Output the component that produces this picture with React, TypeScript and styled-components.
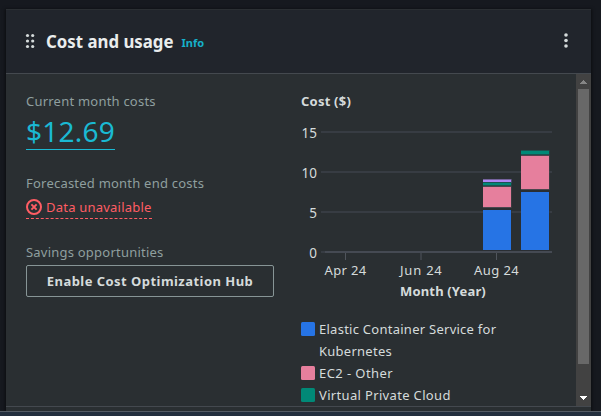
import React from 'react';
import styled, { createGlobalStyle } from 'styled-components';

const GlobalStyle = createGlobalStyle`
  * { box-sizing: border-box; }
  body { margin: 0; background: #16191f; overflow: hidden; }
`;

const Page = styled.div`
  width: 601px;
  height: 416px;
  display: flex;
  flex-direction: column;
  padding-top: 9px;
  background: #16191f;
  font-family: 'Noto Sans', sans-serif;
  font-size: 13px;
  line-height: 22px;
  letter-spacing: 0.22px;
  color: #d5dbdb;
  overflow: hidden;
`;

const Widget = styled.section`
  width: 585px;
  height: 402px;
  margin-left: 6px;
  display: flex;
  flex-direction: column;
  flex: none;
  background: #2a2f32;
  border-top: 1px solid #2b2f33;
  box-shadow: 0 1px 3px 1px rgba(0, 0, 0, 0.5);
`;

const Header = styled.header`
  height: 64px;
  flex: none;
  display: flex;
  align-items: center;
  padding: 0 20px 2px 19px;
  background: #21252c;
  border-bottom: 1px solid #44494f;
`;

const Title = styled.h2`
  margin: 0 -9px 0 11px;
  font-size: 18px;
  line-height: 22px;
  font-weight: 700;
  letter-spacing: 0;
  transform: scaleX(0.934);
  transform-origin: 0 50%;
  color: #eaeded;
  white-space: nowrap;
`;

const InfoLink = styled.a`
  margin: 4px auto 0 8px;
  font-size: 11px;
  line-height: 16px;
  font-weight: 700;
  letter-spacing: 0;
  color: #16b0c9;
`;

const Body = styled.div`
  height: 332px;
  flex: none;
  display: flex;
  overflow: hidden;
`;

const Content = styled.div`
  flex: 1;
  display: grid;
  grid-template-columns: 248px 251px;
  column-gap: 27px;
  padding: 16px 0 0 20px;
`;

const Summary = styled.div`
  display: flex;
  flex-direction: column;
  align-items: flex-start;
`;

const Metric = styled.div<{ $height: number }>`
  height: ${(p) => p.$height}px;
  display: flex;
  flex-direction: column;
  align-items: flex-start;
`;

const Label = styled.div`
  height: 22px;
  color: #8f9f9f;
  white-space: nowrap;
`;

const Amount = styled.a`
  height: 38px;
  font-size: 28px;
  line-height: 38px;
  letter-spacing: 0.25px;
  color: #1ab9d3;
  border-bottom: 1px solid #1ab9d3;
`;

const ErrorStatus = styled.a`
  height: 22px;
  margin-top: 3px;
  display: flex;
  gap: 4px;
  line-height: 20px;
  color: #ff5d64;
  white-space: nowrap;
  border-bottom: 1px dashed #ff5d64;

  svg { margin-top: 2px; }
`;

const HubButton = styled.button`
  width: 248px;
  height: 32px;
  margin-top: 2px;
  padding: 0;
  font: 700 13px/22px 'Noto Sans', sans-serif;
  letter-spacing: 0.46px;
  color: #d5dbdb;
  background: transparent;
  border: 1px solid #879596;
  border-radius: 2px;
  white-space: nowrap;
`;

const ChartPanel = styled.div`
  display: flex;
  flex-direction: column;
`;

const ChartTitle = styled.div`
  height: 22px;
  font-weight: 700;
`;

const Chart = styled.svg`
  display: block;
  flex: none;
  margin-bottom: 14px;
  font-family: 'Noto Sans', sans-serif;
  font-size: 13px;
`;

const LegendItem = styled.div<{ $spacing: number }>`
  display: flex;
  gap: 4px;
  width: 215px;
  flex: none;
  letter-spacing: ${(p) => p.$spacing}px;
`;

const Swatch = styled.span<{ $color: string }>`
  width: 14px;
  height: 14px;
  flex: none;
  margin-top: 4px;
  border-radius: 1.5px;
  background: ${(p) => p.$color};
`;

const Scrollbar = styled.div`
  width: 15px;
  display: flex;
  flex-direction: column;
  align-items: center;
  background: #424242;
`;

const Thumb = styled.div`
  width: 11px;
  height: 275px;
  background: #686868;
`;

const ArrowBox = styled.div<{ $height: number }>`
  height: ${(p) => p.$height}px;

  svg { display: block; }
`;

const Footer = styled.div`
  flex: 1;
  border-top: 1px solid #44494f;
`;

const BottomBar = styled.div`
  flex: 1;
  background: #232f3e;
  border-top: 1px solid #545b64;
`;

const BLUE = '#2674e5';
const PINK = '#e67f9d';
const GREEN = '#018977';
const PURPLE = '#b088f5';

const segments = [
  { x: 483, y: 180, h: 2, color: PURPLE },
  { x: 483, y: 183, h: 2, color: GREEN },
  { x: 483, y: 187, h: 20, color: PINK },
  { x: 483, y: 210, h: 40, color: BLUE },
  { x: 521, y: 151, h: 3, color: GREEN },
  { x: 521, y: 156, h: 33, color: PINK },
  { x: 521, y: 192, h: 58, color: BLUE },
];

const edgeColor: Record<string, string> = {
  [BLUE]: '#2a2e33',
  [PINK]: '#4b464e',
  [GREEN]: '#1c5450',
  [PURPLE]: '#75629c',
};

const legend = [
  { color: BLUE, label: 'Elastic Container Service for Kubernetes', spacing: 0.26 },
  { color: PINK, label: 'EC2 - Other', spacing: 0.42 },
  { color: GREEN, label: 'Virtual Private Cloud', spacing: 0.34 },
];

const CostChart = () => (
  <Chart width="251" height="192" viewBox="301 112 251 192" fill="#d5dbdb">
    {[131, 171, 211].map((y) => (
      <rect key={y} x="321" y={y} width="231" height="2" fill="#373c43" />
    ))}
    <rect x="321" y="251" width="4" height="2" fill="#373c43" />
    <rect x="325" y="251" width="227" height="2" fill="#454a53" />
    <rect x="345" y="253" width="1" height="7" fill="#50555c" />
    <rect x="420" y="253" width="2" height="7" fill="#3c4147" />
    <rect x="496" y="253" width="1" height="7" fill="#50555c" />
    {segments.map((s) => (
      <g key={`${s.x}-${s.y}`}>
        <rect x={s.x} y={s.y - 1} width="28.5" height={s.h + 2} fill={edgeColor[s.color]} />
        <rect x={s.x} y={s.y} width="28" height={s.h} fill={s.color} />
      </g>
    ))}
    {[['15', 138], ['10', 178], ['5', 218], ['0', 258]].map(([t, y]) => (
      <text key={t} x="317" y={y} fontSize="13.5" letterSpacing="0" textAnchor="end">{t}</text>
    ))}
    <text x="324.5" y="275" textLength="42">Apr 24</text>
    <text x="400" y="275" textLength="42">Jun 24</text>
    <text x="474" y="275" textLength="45">Aug 24</text>
    <text x="400" y="296" fontWeight="700" textLength="86">Month (Year)</text>
  </Chart>
);

export default function App() {
  return (
    <>
      <GlobalStyle />
      <Page>
        <Widget>
          <Header>
            <svg width="10" height="16" fill="#d5dbdb">
              {[2.5, 7.7].map((x) => [2.5, 8, 13.5].map((y) => (
                <circle key={`${x}-${y}`} cx={x} cy={y} r="1.6" />
              )))}
            </svg>
            <Title>Cost and usage</Title>
            <InfoLink>Info</InfoLink>
            <svg width="10" height="16" fill="#d5dbdb">
              {[2, 7.5, 13].map((y) => (
                <circle key={y} cx="5" cy={y} r="1.8" />
              ))}
            </svg>
          </Header>
          <Body>
            <Content>
              <Summary>
                <Metric $height={82}>
                  <Label>Current month costs</Label>
                  <Amount>$12.69</Amount>
                </Metric>
                <Metric $height={69}>
                  <Label>Forecasted month end costs</Label>
                  <ErrorStatus>
                    <svg width="16" height="16" viewBox="0 0 16 16" fill="none" stroke="#ff5d64" strokeWidth="2">
                      <circle cx="8" cy="8" r="7" />
                      <path d="M5.4 5.4l5.2 5.2M10.6 5.4l-5.2 5.2" />
                    </svg>
                    Data unavailable
                  </ErrorStatus>
                </Metric>
                <Label>Savings opportunities</Label>
                <HubButton>Enable Cost Optimization Hub</HubButton>
              </Summary>
              <ChartPanel>
                <ChartTitle>Cost ($)</ChartTitle>
                <CostChart />
                {legend.map((item) => (
                  <LegendItem key={item.label} $spacing={item.spacing}>
                    <Swatch $color={item.color} />
                    <span>{item.label}</span>
                  </LegendItem>
                ))}
              </ChartPanel>
            </Content>
            <Scrollbar>
              <ArrowBox $height={15}>
                <svg width="15" height="15" shapeRendering="crispEdges"><path d="M7.5 5.5L11.5 10H3.5z" fill="#868686" /></svg>
              </ArrowBox>
              <Thumb />
              <ArrowBox $height={42}>
                <svg width="15" height="42" shapeRendering="crispEdges"><path d="M3.5 32h8L7.5 36.5z" fill="#fff" /></svg>
              </ArrowBox>
            </Scrollbar>
          </Body>
          <Footer />
        </Widget>
        <BottomBar />
      </Page>
    </>
  );
}
